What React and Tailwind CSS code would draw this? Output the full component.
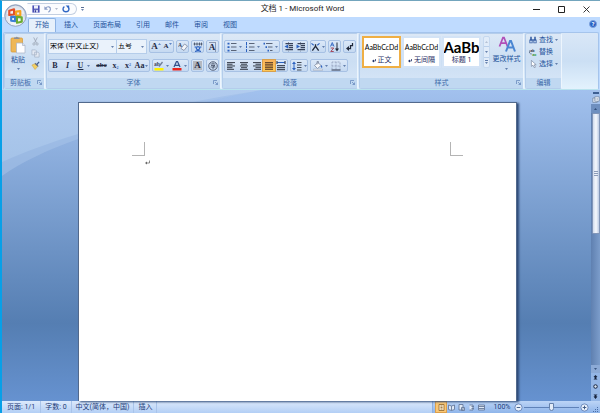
import React, { useState } from 'react';

const tabs = ['开始', '插入', '页面布局', '引用', '邮件', '审阅', '视图'];

// --- Small building blocks ---

const Caret = ({ className = 'text-[#3f5f95]' }) => (
    <svg viewBox="0 0 4 2" className={`w-[3px] h-[2px] shrink-0 ${className}`} aria-hidden="true">
        <path d="M0 0h4L2 2z" fill="currentColor" />
    </svg>
);

const Icon = ({ children, className = 'w-[10px] h-[10px]', box = '0 0 20 20' }) => (
    <svg viewBox={box} className={`shrink-0 ${className}`} fill="none" aria-hidden="true">{children}</svg>
);

const ButtonSet = ({ children }) => (
    <div className="flex h-[13px] items-stretch rounded-[2px] border border-[#a7c1e4] bg-linear-to-b from-[#dbe8f8] to-[#c5d9f1]">
        {children}
    </div>
);

const Tool = ({ label, className = 'w-[13px]', caret = false, children }) => (
    <button type="button" aria-label={label} className={`flex items-center justify-center gap-[2px] font-['Liberation_Serif',serif] leading-none text-[#1f2a44] ${className}`}>
        {children}
        {caret && <Caret />}
    </button>
);

const Group = ({ title, launcher = true, className = '', children }) => (
    <section className={`flex shrink-0 flex-col rounded-[2px] border border-[#b4cdeb] border-r-[#edf5fd] bg-linear-to-b from-[#dce8f6] via-[#cbdef3] to-[#d8e7f8] ${className}`}>
        <div className="flex flex-1">{children}</div>
        <div className={`relative flex h-[10px] items-center bg-[#c0d8f1] leading-none text-[#3e6aaa] ${title === '剪贴板' ? 'pl-[5px]' : 'justify-center'}`}>
            <h2>{title}</h2>
            {launcher && (
                <button type="button" aria-label={`${title}选项`} className="absolute right-[2px] top-[2px]">
                    <Icon className="w-[5px] h-[5px]" box="0 0 10 10">
                        <path d="M1 8V1h7M4 4l5 5M9 5v4H5" stroke="#5f83b8" strokeWidth="1.4" />
                    </Icon>
                </button>
            )}
        </div>
    </section>
);

const Lines = ({ rows, color = '#454c59' }) => (
    <Icon>
        {rows.map(([x, w], i) => (
            <rect key={i} x={x} y={2 + i * 3.4} width={w} height="2.2" fill={color} />
        ))}
    </Icon>
);

// --- Title bar ---

const OfficeButton = () => (
    <button type="button" aria-label="Office 按钮" className="absolute left-[2px] top-[3px] z-10 w-[23px] h-[23px]">
        <svg viewBox="0 0 48 48" className="w-full h-full" aria-hidden="true">
            <defs>
                <radialGradient id="orb" cx="50%" cy="75%" r="75%">
                    <stop offset="0" stopColor="#ffffff" />
                    <stop offset="0.55" stopColor="#dfe5ef" />
                    <stop offset="1" stopColor="#94a5c2" />
                </radialGradient>
            </defs>
            <circle cx="24" cy="24" r="22.5" fill="url(#orb)" stroke="#8fa0bc" strokeWidth="2" />
            <path d="M5 22a19 19 0 0 1 38 0c-10-5-28-5-38 0z" fill="#fff" opacity="0.6" />
            <g fill="none" strokeWidth="4.5" strokeLinejoin="round">
                <path d="M11 14l10-3v11l-10 1z" stroke="#e2502a" />
                <path d="M25 16l9-1v9h-9z" stroke="#f6a21d" />
                <path d="M15 27h8v9l-8-1z" stroke="#3b7fd6" />
                <path d="M27 27l10 1v9l-10 2z" stroke="#69ac33" />
            </g>
        </svg>
    </button>
);

const TitleBar = () => (
    <header className="flex h-[16px] shrink-0 items-center bg-white">
        <div className="ml-[25px] flex h-[12px] w-[50px] items-center rounded-r-full border border-[#c3cfe1] border-l-transparent bg-[#fbfcfe] pl-[4px]">
            <button type="button" aria-label="保存">
                <Icon className="w-[8px] h-[8px]">
                    <path d="M1 1h18v18H1z" fill="#4a4fb4" />
                    <path d="M5 1h10v8H5z" fill="#eef1fb" />
                    <path d="M5 12h10v7H5z" fill="#c9cfee" />
                    <path d="M7 13h3v5H7z" fill="#33388f" />
                </Icon>
            </button>
            <button type="button" aria-label="撤消" className="ml-[4px] flex items-center gap-[3px]">
                <Icon className="w-[8px] h-[8px]">
                    <path d="M4 8c5-6 13-4 12 3-.4 3-2 5-5 7" stroke="#8c9fc8" strokeWidth="3" />
                    <path d="M1 3v9h9z" fill="#8c9fc8" />
                </Icon>
                <Caret className="text-[#9aa4b8]" />
            </button>
            <button type="button" aria-label="重复" className="ml-[4px]">
                <Icon className="w-[8px] h-[8px]">
                    <path d="M6 4C1 7 1 17 10 17c8 0 9-8 5-12" stroke="#2f66c4" strokeWidth="3.4" />
                    <path d="M9 1h9v9z" fill="#2f66c4" />
                </Icon>
            </button>
        </div>
        <button type="button" aria-label="自定义快速访问工具栏" className="ml-[4px] flex flex-col items-center gap-px">
            <span className="h-px w-[3px] bg-[#5b6f93]" />
            <Caret />
        </button>
        <h1 className="flex-1 pr-[12px] text-center text-[8px] leading-none text-[#222]">文档 1 - Microsoft Word</h1>
        <div className="flex items-center gap-[18px] pr-[10px]">
            <button type="button" aria-label="最小化">
                <Icon className="w-[7px] h-[7px]" box="0 0 7 7"><path d="M0 3.5h7" stroke="#222" /></Icon>
            </button>
            <button type="button" aria-label="最大化">
                <Icon className="w-[7px] h-[7px]" box="0 0 7 7"><path d="M.5.5h6v6h-6z" stroke="#222" /></Icon>
            </button>
            <button type="button" aria-label="关闭">
                <Icon className="w-[7px] h-[7px]" box="0 0 7 7"><path d="M.5.5l6 6M6.5.5l-6 6" stroke="#222" strokeWidth="0.9" /></Icon>
            </button>
        </div>
    </header>
);

const TabBar = ({ active, onChange }) => (
    <nav className="flex h-[15px] shrink-0 items-end bg-[#bfdbff] pl-[26px] pr-[3px]">
        {tabs.map((tab) => (
            <button
                key={tab}
                type="button"
                onClick={() => onChange(tab)}
                className={`mr-px flex h-[14px] items-center rounded-t-[2px] border border-b-0 px-[6px] leading-none text-[#24539b] ${
                    active === tab ? 'border-[#8db2e3] bg-[#e6f0fb]' : 'border-transparent'
                }`}
            >
                {tab}
            </button>
        ))}
        <button type="button" aria-label="帮助" className="mb-[4px] ml-auto flex h-[8px] w-[8px] items-center justify-center rounded-full border border-[#7fa3dd] bg-[#2861c4] text-[6px] font-bold leading-none text-white">
            ?
        </button>
    </nav>
);

// --- Ribbon groups ---

const ClipboardGroup = () => (
    <Group title="剪贴板" className="w-[41px]">
        <button type="button" className="flex w-[26px] flex-col items-center pt-[2px] leading-none text-[#24539b]">
            <Icon className="w-[16px] h-[18px]" box="0 0 32 36">
                <rect x="2" y="4" width="23" height="28" rx="2" fill="#eeb757" stroke="#d79a3a" strokeWidth="1.5" />
                <path d="M8 6h11V3h-3a3 3 0 0 0-5 0H8z" fill="#8b8f99" />
                <path d="M13 14h12l5 5v15H13z" fill="#fdfdff" stroke="#a9b4c8" strokeWidth="1.5" />
                <path d="M25 14v5h5" stroke="#a9b4c8" strokeWidth="1.5" />
            </Icon>
            <span className="mt-[3px]">粘贴</span>
            <Caret className="mt-[4px] text-[#3f5f95]" />
        </button>
        <div className="flex flex-col items-center gap-[3px] pt-[3px]">
            <button type="button" aria-label="剪切">
                <Icon className="w-[9px] h-[9px]">
                    <path d="M6 1l6 12M14 1L8 13" stroke="#9fa9b9" strokeWidth="2" />
                    <circle cx="6.5" cy="15.5" r="2.5" stroke="#9fa9b9" strokeWidth="1.8" />
                    <circle cx="13.5" cy="15.5" r="2.5" stroke="#9fa9b9" strokeWidth="1.8" />
                </Icon>
            </button>
            <button type="button" aria-label="复制">
                <Icon className="w-[9px] h-[9px]">
                    <path d="M2 2h8l2 2v9H2zM8 7h8l2 2v9H8z" fill="#e3e9f3" stroke="#a6b2c7" strokeWidth="1.6" />
                </Icon>
            </button>
            <button type="button" aria-label="格式刷">
                <Icon className="w-[9px] h-[9px]">
                    <path d="M11 8l6-7 2 2-6 7z" fill="#3c5a93" />
                    <path d="M2 9l7-3 6 6-6 7z" fill="#f3cf62" stroke="#c99b33" />
                    <path d="M9 5l7 7" stroke="#656d80" strokeWidth="2.5" />
                </Icon>
            </button>
        </div>
    </Group>
);

const Combo = ({ label, value, className }) => (
    <label className={`relative flex h-[15px] items-center border border-[#b5cdea] bg-[#eaf2fb] ${className}`}>
        <select aria-label={label} defaultValue={value} className="h-full w-full appearance-none bg-transparent pl-px leading-none text-black outline-none">
            <option>{value}</option>
        </select>
        <span className="pointer-events-none absolute right-[2px] flex"><Caret /></span>
    </label>
);

const FontGroup = () => (
    <Group title="字体">
        <div className="flex flex-col gap-[5px] px-px pt-[5px]">
            <div className="flex items-center gap-[2px]">
                <div className="flex">
                    <Combo label="字体" value="宋体 (中文正文)" className="w-[69px]" />
                    <Combo label="字号" value="五号" className="w-[30px] border-l-0" />
                </div>
                <ButtonSet>
                    <Tool label="增大字体" className="w-[12px]"><span className="text-[9px] font-bold">A</span><Caret className="-ml-[2px] mb-[5px] rotate-180 text-[#3867b8]" /></Tool>
                    <Tool label="缩小字体" className="w-[11px]"><span className="text-[7px] font-bold">A</span><Caret className="-ml-[2px] mb-[5px] text-[#3867b8]" /></Tool>
                </ButtonSet>
                <ButtonSet>
                    <Tool label="清除格式" className="w-[11px]">
                        <Icon>
                            <text x="0" y="10" fontSize="11" fontWeight="bold" fill="#39435a">A</text>
                            <path d="M6 13l7-9 6 4-7 9z" fill="#f4f6fb" stroke="#77839b" strokeWidth="1.5" />
                        </Icon>
                    </Tool>
                </ButtonSet>
                <ButtonSet>
                    <Tool label="拼音指南" className="w-[11px]">
                        <Icon>
                            <path d="M1 4h18M3 1v6M8 1v6M13 1v6M17 1v6" stroke="#39435a" strokeWidth="1.5" />
                            <path d="M3 10h14M10 8v2M6 11c1 4 5 7 10 8M14 11c-1 4-5 7-10 8" stroke="#2c62c0" strokeWidth="2.2" />
                        </Icon>
                    </Tool>
                </ButtonSet>
                <ButtonSet>
                    <Tool label="字符边框" className="w-[11px]">
                        <span className="border-r border-t border-[#8c98b0] text-[9px] font-bold">A</span>
                    </Tool>
                </ButtonSet>
            </div>
            <div className="flex items-center justify-between text-[8px] font-bold">
                <ButtonSet>
                    <Tool label="加粗" className="w-[12px]">B</Tool>
                    <Tool label="倾斜" className="w-[13px]"><i>I</i></Tool>
                    <Tool label="下划线" className="w-[20px]" caret><u className="mr-[2px]">U</u></Tool>
                    <Tool label="删除线" className="w-[15px]"><s className="text-[7px]">abc</s></Tool>
                    <Tool label="下标" className="w-[13px]"><span>x<sub className="text-[4px] text-[#2c62c0]">2</sub></span></Tool>
                    <Tool label="上标" className="w-[12px]"><span>x<sup className="text-[4px] text-[#2c62c0]">2</sup></span></Tool>
                    <Tool label="更改大小写" className="w-[15px]" caret><span className="-mr-px text-[8px]">Aa</span></Tool>
                </ButtonSet>
                <ButtonSet>
                    <Tool label="突出显示" className="w-[17px]" caret>
                        <Icon>
                            <text x="0" y="10" fontSize="11" fontWeight="bold" fill="#39435a">ab</text>
                            <path d="M10 11l7-9" stroke="#6f7b94" strokeWidth="2.5" />
                            <path d="M1 14h18v5H1z" fill="#fff200" />
                        </Icon>
                    </Tool>
                    <Tool label="字体颜色" className="w-[18px]" caret>
                        <Icon>
                            <path d="M4 12L9 1h2l5 11M6 8.5h8" stroke="#35518c" strokeWidth="2.5" />
                            <path d="M1 14h18v5H1z" fill="#e8221c" />
                        </Icon>
                    </Tool>
                </ButtonSet>
                <ButtonSet>
                    <Tool label="字符底纹" className="w-[11px]"><span className="bg-[#b4b8c0] px-px text-[9px]">A</span></Tool>
                </ButtonSet>
                <ButtonSet>
                    <Tool label="带圈字符" className="w-[11px]">
                        <Icon>
                            <circle cx="10" cy="10" r="8.5" stroke="#39435a" strokeWidth="1.6" />
                            <path d="M5 6h10M6 9h8l-4 3v4M5 12h10M10 3v3" stroke="#39435a" strokeWidth="1.5" />
                        </Icon>
                    </Tool>
                </ButtonSet>
            </div>
        </div>
    </Group>
);

const IndentIcon = ({ flip }) => (
    <Icon>
        <path d="M3 3h15M10 7h8M10 11h8M3 15h15" stroke="#39435a" strokeWidth="2.5" />
        <path d={flip ? 'M1 5l7 4-7 4z' : 'M8 5L1 9l7 4z'} fill="#2c62c0" />
        <path d="M9 0v19" stroke="#39435a" strokeWidth="1" strokeDasharray="2 1.5" />
    </Icon>
);

const ParagraphGroup = () => (
    <Group title="段落">
        <div className="flex flex-col gap-[6px] px-px pt-[6px]">
            <div className="flex items-center gap-[2px]">
                <ButtonSet>
                    <Tool label="项目符号" className="w-[18px]" caret>
                        <Icon><path d="M1 3h4M1 10h4M1 17h4" stroke="#2c62c0" strokeWidth="3.5" /><path d="M8 3h11M8 10h11M8 17h11" stroke="#596478" strokeWidth="2" /></Icon>
                    </Tool>
                    <Tool label="编号" className="w-[18px]" caret>
                        <Icon><path d="M3 0v6M3 7v5M3 14v6" stroke="#2c62c0" strokeWidth="2" /><path d="M8 3h11M8 10h11M8 17h11" stroke="#596478" strokeWidth="2" /></Icon>
                    </Tool>
                    <Tool label="多级列表" className="w-[18px]" caret>
                        <Icon><path d="M1 3h3M5 10h3M9 17h3" stroke="#2c62c0" strokeWidth="3.5" /><path d="M6 3h13M10 10h9M14 17h5" stroke="#596478" strokeWidth="2" /></Icon>
                    </Tool>
                </ButtonSet>
                <ButtonSet>
                    <Tool label="减少缩进量" className="w-[12px]"><IndentIcon /></Tool>
                    <Tool label="增加缩进量" className="w-[12px]"><IndentIcon flip /></Tool>
                </ButtonSet>
                <ButtonSet>
                    <Tool label="中文版式" className="w-[14px]" caret>
                        <Icon className="w-[9px] h-[10px]"><path d="M3 18L10 8l7 10M10 9V4" stroke="#20283a" strokeWidth="3" /><path d="M1 2l5 4M19 2l-5 4" stroke="#2c62c0" strokeWidth="2.5" /></Icon>
                    </Tool>
                </ButtonSet>
                <ButtonSet>
                    <Tool label="排序" className="w-[11px]">
                        <Icon>
                            <path d="M1 9l3.5-8L8 9M2.5 6h4" stroke="#2c62c0" strokeWidth="1.8" />
                            <path d="M1.5 12h6l-6 7h6" stroke="#a13c4f" strokeWidth="1.8" />
                            <path d="M14 1v15" stroke="#20283a" strokeWidth="2" /><path d="M10 13h8l-4 6z" fill="#20283a" />
                        </Icon>
                    </Tool>
                </ButtonSet>
                <ButtonSet>
                    <Tool label="显示编辑标记" className="w-[11px]">
                        <Icon><path d="M15 2v5h-4v6H6" stroke="#20283a" strokeWidth="2.5" /><path d="M8 8v10l-6-5z" fill="#20283a" /></Icon>
                    </Tool>
                </ButtonSet>
            </div>
            <div className="flex items-center gap-[2px]">
                <ButtonSet>
                    <Tool label="左对齐" className="w-[12px]"><Lines rows={[[2, 16], [2, 11], [2, 16], [2, 11], [2, 14]]} /></Tool>
                    <Tool label="居中"><Lines rows={[[2, 16], [4, 12], [2, 16], [4, 12], [2, 16]]} /></Tool>
                    <Tool label="右对齐"><Lines rows={[[2, 16], [7, 11], [2, 16], [7, 11], [4, 14]]} /></Tool>
                    <Tool label="两端对齐" className="w-[12px] bg-linear-to-b from-[#f9b25a] to-[#ffc956] outline outline-[#d8a04c]"><Lines color="#6b4a2c" rows={[[2, 16], [2, 16], [2, 16], [2, 16], [2, 16]]} /></Tool>
                    <Tool label="分散对齐" className="w-[12px]">
                        <Icon><path d="M2 3h5M13 3h5M6 3h8" stroke="#2c62c0" strokeWidth="2" /><path d="M2 0v6M18 0v6M2 9h16M2 13h16M2 17h16" stroke="#454c59" strokeWidth="2.5" /></Icon>
                    </Tool>
                </ButtonSet>
                <ButtonSet>
                    <Tool label="行距" className="w-[16px]" caret>
                        <Icon><path d="M4 4v12" stroke="#2c62c0" strokeWidth="2" /><path d="M0 6l4-5 4 5zM0 14l4 5 4-5z" fill="#2c62c0" /><path d="M10 3h9M10 8h9M10 13h9M10 18h9" stroke="#454c59" strokeWidth="2" /></Icon>
                    </Tool>
                </ButtonSet>
                <ButtonSet>
                    <Tool label="底纹" className="w-[18px]" caret>
                        <Icon>
                            <path d="M3 9l7-6 6 6-7 6z" fill="#f5f7fb" stroke="#77839b" strokeWidth="1.5" />
                            <path d="M8 7V1h3v4" stroke="#77839b" strokeWidth="1.5" />
                            <path d="M16 8c3 2 3 4 2 6-2-1-3-3-2-6z" fill="#2c62c0" />
                            <path d="M1 16h18v3H1z" fill="#e4e9f0" stroke="#9aa6bb" />
                        </Icon>
                    </Tool>
                    <Tool label="边框" className="w-[18px]" caret>
                        <Icon><path d="M2 2h16v15M2 2v15M10 2v16M2 10h16" stroke="#8b9ab5" strokeWidth="1.5" strokeDasharray="2 1" /><path d="M1 18h18" stroke="#39435a" strokeWidth="2.2" /></Icon>
                    </Tool>
                </ButtonSet>
            </div>
        </div>
    </Group>
);

const StyleCard = ({ sample, name, mark, selected, big }) => (
    <button
        type="button"
        aria-pressed={selected}
        className={`flex h-[32px] w-[39px] flex-col items-center justify-between overflow-hidden border-2 bg-white pb-[2px] pt-[4px] leading-none text-[#1f2f66] ${
            selected ? 'border-[#efaf45]' : 'border-[#d3e3f6]'
        }`}
    >
        <span className={`flex h-[10px] items-center whitespace-nowrap font-['Lato',sans-serif] text-black ${big ? 'text-[15px] font-bold' : 'text-[7px]'}`}>{sample}</span>
        <span className="flex items-center gap-[2px] whitespace-nowrap">
            {mark && <Icon className="w-[4px] h-[4px]" box="0 0 8 8"><path d="M7 0v4H3" stroke="#1f2f66" strokeWidth="1.5" /><path d="M4 1v6L0 4z" fill="#1f2f66" /></Icon>}
            {name}
        </span>
    </button>
);

const StylesGroup = () => (
    <Group title="样式" className="w-[165px]">
        <div className="flex flex-1 pl-[2px] pt-[2px]">
            <div className="flex gap-px">
                <StyleCard sample="AaBbCcDd" name="正文" mark selected />
                <StyleCard sample="AaBbCcDd" name="无间隔" mark />
                <StyleCard sample="AaBb" name="标题 1" big />
            </div>
            <div className="ml-[2px] flex h-[32px] w-[7px] flex-col divide-y divide-[#b9cfea] rounded-[2px] border border-[#c5d8ef] bg-[#e1ecf9]">
                <button type="button" aria-label="上一行" className="flex flex-1 items-center justify-center"><Caret className="rotate-180 text-[#a5b3c8]" /></button>
                <button type="button" aria-label="下一行" className="flex flex-1 items-center justify-center"><Caret /></button>
                <button type="button" aria-label="其他" className="flex flex-1 flex-col items-center justify-center gap-px"><span className="h-px w-[3px] bg-[#5f7cae]" /><Caret /></button>
            </div>
            <button type="button" className="flex flex-1 flex-col items-center whitespace-nowrap leading-none text-[#24539b]">
                <Icon className="w-[18px] h-[17px]" box="0 0 36 34">
                    <path d="M3 21L10 3h2l7 18M6 14h10" stroke="#b04fb8" strokeWidth="3.5" />
                    <path d="M16 31l8-21h2l8 21M19 23h12" stroke="#4b86d2" strokeWidth="4" />
                </Icon>
                <span className="mt-[3px]">更改样式</span>
                <Caret className="mt-[5px] text-[#3f5f95]" />
            </button>
        </div>
    </Group>
);

const EditingGroup = () => (
    <Group title="编辑" launcher={false} className="w-[37px]">
        <div className="flex flex-col gap-[4px] pl-[3px] pt-[2px] leading-none text-[#24539b]">
            <button type="button" className="flex items-center gap-[2px] whitespace-nowrap">
                <Icon className="w-[8px] h-[8px]">
                    <path d="M3 2h4v5l2 3v8H1v-8l2-3zM13 2h4v5l2 3v8h-8v-8l2-3z" fill="#3b62a6" />
                    <path d="M8 8h4v4H8z" fill="#3b62a6" /><path d="M3 12h4v4H3zM13 12h4v4h-4z" fill="#c9dcf5" />
                </Icon>
                查找<Caret />
            </button>
            <button type="button" className="flex items-center gap-[2px] whitespace-nowrap">
                <Icon className="w-[8px] h-[8px]">
                    <text x="3" y="9" fontSize="10" fontWeight="bold" fill="#39435a">ab</text>
                    <path d="M1 6c-1 6 1 9 6 9" stroke="#4d5d7c" strokeWidth="1.8" />
                    <text x="8" y="19" fontSize="10" fontWeight="bold" fill="#3a9a4a">ac</text>
                </Icon>
                替换
            </button>
            <button type="button" className="flex items-center gap-[2px] whitespace-nowrap">
                <Icon className="w-[8px] h-[8px]"><path d="M6 1v15l4-3 3 6 3-1-3-6h5z" fill="#fff" stroke="#6b7a95" strokeWidth="1.5" /></Icon>
                选择<Caret />
            </button>
        </div>
    </Group>
);

// --- Document area ---

const ScrollBar = () => (
    <div className="flex w-[9px] shrink-0 flex-col items-center bg-[#a3c1ec]">
        <span className="mt-[2px] h-[2px] w-[6px] bg-[#3d5f92]" />
        <button type="button" aria-label="标尺" className="mt-[2px]">
            <Icon className="w-[8px] h-[8px]"><path d="M2 5h11v11H2z" fill="#dce7f5" stroke="#60748f" strokeWidth="1.5" /><path d="M7 2h11v11H7z" fill="#eef3fa" stroke="#60748f" strokeWidth="1.5" /><path d="M10 5v5M14 5v5" stroke="#60748f" /></Icon>
        </button>
        <div className="flex w-full flex-1 flex-col items-center bg-linear-to-r from-[#5f80b0] to-[#7c9dcb]">
            <button type="button" aria-label="向上滚动" className="flex h-[9px] w-full items-center justify-center bg-[#6e8fbf]"><Caret className="rotate-180 text-[#1f3a66]" /></button>
            <div className="flex h-[45%] w-[8px] flex-col items-center justify-center gap-px rounded-[1px] border border-[#8296b8] bg-linear-to-r from-[#cfdaec] via-[#f6f9fd] to-[#bccbe4]">
                <span className="h-px w-[4px] bg-[#8b9bb8]" />
                <span className="h-px w-[4px] bg-[#8b9bb8]" />
                <span className="h-px w-[4px] bg-[#8b9bb8]" />
            </div>
            <button type="button" aria-label="向下滚动" className="mt-auto flex h-[8px] w-full items-center justify-center bg-[#8caad6]"><Caret className="text-[#1f3a66]" /></button>
        </div>
        <div className="flex h-[28px] w-full flex-col items-center justify-around bg-[#94b6e6]">
            <button type="button" aria-label="前一页"><Icon className="w-[5px] h-[5px]" box="0 0 10 10"><path d="M1 4l4-4 4 4zM3 4h4v2H3zM1 9l4-4 4 4z" fill="#17233c" /></Icon></button>
            <button type="button" aria-label="选择浏览对象"><Icon className="w-[5px] h-[5px]" box="0 0 10 10"><circle cx="5" cy="5" r="3.5" fill="#dbe6f5" stroke="#17233c" strokeWidth="2" /></Icon></button>
            <button type="button" aria-label="下一页"><Icon className="w-[5px] h-[5px]" box="0 0 10 10"><path d="M1 1h8L5 5zM3 4h4v2H3zM1 5h8l-4 5z" fill="#17233c" /></Icon></button>
        </div>
    </div>
);

const DocumentArea = () => (
    <main className="relative flex min-h-0 flex-1 bg-linear-to-b from-[#a2c1ee] via-[#557eb2] via-75% to-[#6692d0]">
        {/* light sweep behind the sheet */}
        <svg viewBox="0 0 260 100" className="absolute left-0 top-0 w-[260px] h-[100px]" aria-hidden="true">
            <defs>
                <linearGradient id="sweep" x1="0" y1="0" x2="0" y2="1">
                    <stop offset="0" stopColor="#b5cef0" />
                    <stop offset="1" stopColor="#a8c6ea" />
                </linearGradient>
            </defs>
            <path d="M0 0H260C200 12 150 22 76 49C45 60 20 72 0 86z" fill="#a9c6ea" opacity="0.5" />
            <path d="M0 0H260C200 9 140 20 76 44C50 52 22 62 0 72z" fill="url(#sweep)" opacity="0.75" />
        </svg>
        <div className="relative flex flex-1 justify-center pl-[3px] pr-px pt-[12px]">
            <article className="w-3/4 border border-b-0 border-[#52698c] bg-white px-[53px] pt-[39px] shadow-[2px_1px_2px_#2f4b78]">
                <div className="flex justify-between">
                    <span className="h-[14px] w-[13px] border-b border-r border-[#b4b4b4]" />
                    <span className="h-[14px] w-[13px] border-b border-l border-[#b4b4b4]" />
                </div>
                <Icon className="ml-[13px] mt-[4px] w-[5px] h-[5px]" box="0 0 10 10"><path d="M9 1v5H3" stroke="#666" strokeWidth="1.5" /><path d="M4 3v6L0 6z" fill="#666" /></Icon>
            </article>
        </div>
        <ScrollBar />
    </main>
);

const ViewButton = ({ label, active, d }) => (
    <button type="button" aria-label={label} className={`flex h-[10px] w-[10px] items-center justify-center ${active ? 'bg-[#fbc774] outline outline-[#dba04c]' : ''}`}>
        <Icon className="w-[7px] h-[7px]" box="0 0 14 14"><path d={d} fill={active ? '#fff1d5' : '#dfe8f5'} stroke={active ? '#9a7136' : '#687b9c'} strokeWidth="1.8" /></Icon>
    </button>
);

const StatusBar = () => (
    <footer className="flex h-[12px] shrink-0 items-center bg-linear-to-b from-[#dce9fb] to-[#b3cff5] leading-none text-[#1d3c77]">
        <span className="flex h-full items-center border-r border-[#a9c4ea] px-[5px]">页面: 1/1</span>
        <span className="flex h-full items-center border-r border-[#a9c4ea] px-[4px]">字数: 0</span>
        <span className="flex h-full items-center border-r border-[#a9c4ea] px-[4px]">中文(简体，中国)</span>
        <span className="flex h-full items-center border-r border-[#a9c4ea] px-[4px]">插入</span>
        <div className="ml-auto flex h-full items-center border-l border-[#8fb0df] bg-linear-to-b from-[#bcd4f6] to-[#8fb5ea] pl-[3px]">
            <ViewButton label="页面视图" active d="M2 1h10v12H2zM5 4h4M5 7h4M5 10h4" />
            <ViewButton label="阅读版式视图" d="M1 2l6 2 6-2v9l-6 2-6-2zM7 4v9" />
            <ViewButton label="Web 版式视图" d="M2 1h8v11H2zM7 7h6v6H7z" />
            <ViewButton label="大纲视图" d="M3 2h7v10H3M7 5h5M7 9h5" />
            <ViewButton label="普通视图" d="M1 2h12v10H1zM1 5h12M1 9h12" />
            <button type="button" className="ml-[4px] w-[24px]">100%</button>
            <button type="button" aria-label="缩小"><Icon className="w-[9px] h-[9px]"><circle cx="10" cy="10" r="8" fill="#e9f1fc" stroke="#5b7bb0" strokeWidth="1.8" /><path d="M6 10h8" stroke="#38537f" strokeWidth="2" /></Icon></button>
            <input
                type="range"
                aria-label="显示比例"
                min="10"
                max="190"
                defaultValue="100"
                className="mx-px h-[9px] w-[55px] appearance-none bg-linear-to-b from-transparent from-45% via-[#5f82b8] via-50% to-transparent to-60% [&::-webkit-slider-thumb]:h-[8px] [&::-webkit-slider-thumb]:w-[5px] [&::-webkit-slider-thumb]:appearance-none [&::-webkit-slider-thumb]:rounded-b-[3px] [&::-webkit-slider-thumb]:border [&::-webkit-slider-thumb]:border-[#6581ab] [&::-webkit-slider-thumb]:bg-[#e3ecf8]"
            />
            <button type="button" aria-label="放大"><Icon className="w-[9px] h-[9px]"><circle cx="10" cy="10" r="8" fill="#e9f1fc" stroke="#5b7bb0" strokeWidth="1.8" /><path d="M6 10h8M10 6v8" stroke="#38537f" strokeWidth="2" /></Icon></button>
            <Icon className="ml-[4px] mr-px w-[6px] h-[6px] self-end" box="0 0 6 6"><path d="M4 0h1v1H4zM2 2h1v1H2zM4 2h1v1H4zM0 4h1v1H0zM2 4h1v1H2zM4 4h1v1H4z" fill="#4a6da6" /></Icon>
        </div>
    </footer>
);

const App = () => {
    const [activeTab, setActiveTab] = useState('开始');

    return (
        <div className="relative flex h-screen flex-col overflow-hidden border-l-2 border-t border-l-[#07a0e8] border-t-[#73a5bd] bg-[#bfdbff] font-['Roboto','Noto_Sans_CJK_SC',sans-serif] text-[7px]">
            <OfficeButton />
            <TitleBar />
            <TabBar active={activeTab} onChange={setActiveTab} />
            <div className="mx-px flex h-[58px] shrink-0 gap-px rounded-[2px] border border-[#a5c4ec] border-b-[#b9e3ee] bg-linear-to-b from-[#d9e7f7] via-[#cbdff4] to-[#e3f2fd]">
                <ClipboardGroup />
                <FontGroup />
                <ParagraphGroup />
                <StylesGroup />
                <EditingGroup />
            </div>
            <DocumentArea />
            <StatusBar />
        </div>
    );
};

export default App;
